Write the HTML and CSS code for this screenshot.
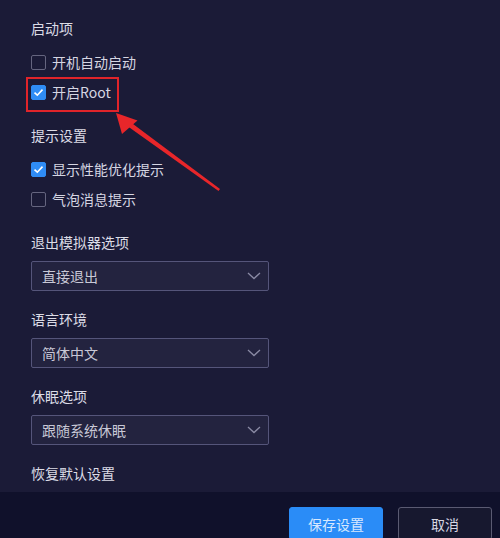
FILE: index.html
```html
<!DOCTYPE html>
<html lang="zh-CN">
<head>
    <meta charset="UTF-8">
    <title>设置</title>
    <link rel="stylesheet" href="styles.css">
</head>
<body>
    <div class="panel">
        <h3 class="title">启动项</h3>
        <div class="group">
            <label class="check"><span class="box"></span>开机自动启动</label>
            <label class="check on"><span class="box"><svg viewBox="0 0 15 15" width="15" height="15"><path d="M3.5 7.6 L6.3 10.2 L11.5 4.6" fill="none" stroke="#fff" stroke-width="1.6"/></svg></span>开启Root</label>
        </div>

        <h3 class="title">提示设置</h3>
        <div class="group">
            <label class="check on"><span class="box"><svg viewBox="0 0 15 15" width="15" height="15"><path d="M3.5 7.6 L6.3 10.2 L11.5 4.6" fill="none" stroke="#fff" stroke-width="1.6"/></svg></span>显示性能优化提示</label>
            <label class="check"><span class="box"></span>气泡消息提示</label>
        </div>

        <h3 class="title">退出模拟器选项</h3>
        <div class="group">
            <div class="select">直接退出<svg class="chev" viewBox="0 0 14 8" width="14" height="8"><path d="M1 1 L7 6.5 L13 1" fill="none" stroke="#8a8aa4" stroke-width="1.3"/></svg></div>
        </div>

        <h3 class="title">语言环境</h3>
        <div class="group">
            <div class="select">简体中文<svg class="chev" viewBox="0 0 14 8" width="14" height="8"><path d="M1 1 L7 6.5 L13 1" fill="none" stroke="#8a8aa4" stroke-width="1.3"/></svg></div>
        </div>

        <h3 class="title">休眠选项</h3>
        <div class="group">
            <div class="select">跟随系统休眠<svg class="chev" viewBox="0 0 14 8" width="14" height="8"><path d="M1 1 L7 6.5 L13 1" fill="none" stroke="#8a8aa4" stroke-width="1.3"/></svg></div>
        </div>

        <h3 class="title last">恢复默认设置</h3>
    </div>

    <div class="footer">
        <button class="btn primary">保存设置</button>
        <button class="btn">取消</button>
    </div>

    <!-- 标注：红框和箭头 -->
    <div class="mark"></div>
    <svg class="arrow" width="500" height="538" viewBox="0 0 500 538">
        <path d="M220 189 L218.5 191 L128 126.5 L131 122.5 Z" fill="#e8262a"/>
        <path d="M116 113 L137.5 120.5 L122 134 Z" fill="#e8262a"/>
    </svg>
</body>
</html>
```

FILE: styles.css
```css
html, body {
    margin: 0;
    height: 100%;
}
body {
    font-family: "Noto Sans CJK SC", "Noto Sans", sans-serif;
    background: #1b1b37;
    color: #d6d6e2;
    font-size: 14px;
    position: relative;
    overflow: hidden;
}
.panel {
    padding: 18px 0 0 31px;
    height: 474px;
}
.title {
    margin: 0 0 9px;
    font-size: 14px;
    font-weight: normal;
    line-height: 20px;
    color: #dcdce6;
}
.group {
    margin-bottom: 18px;
}
.check {
    display: flex;
    align-items: center;
    height: 30px;
    gap: 6px;
    color: #d6d6e2;
}
.box {
    width: 13px;
    height: 13px;
    border: 1px solid #65657f;
    border-radius: 2px;
    display: flex;
}
.check.on .box {
    background: #2f8cf5;
    border-color: #2f8cf5;
}
.check.on .box svg {
    margin: -1px;
}
.select {
    width: 216px;
    height: 28px;
    padding: 0 10px;
    border: 1px solid #55557a;
    border-radius: 2px;
    background: #23233f;
    display: flex;
    align-items: center;
    justify-content: space-between;
    color: #c8c8d6;
}
.chev {
    margin-right: -3px;
}
.footer {
    box-sizing: border-box;
    background: #10112b;
    height: 46px;
    padding: 15px 8px 0 0;
    display: flex;
    justify-content: flex-end;
    gap: 15px;
    overflow: hidden;
}
.btn {
    flex: none;
    width: 94px;
    height: 33px;
    border: 1px solid #5a5a72;
    border-radius: 3px;
    background: #17182f;
    color: #d6d6e2;
    font-family: inherit;
    font-size: 14px;
}
.btn.primary {
    background: #2a8cf7;
    border-color: #2a8cf7;
    color: #d6e8ff;
}
.mark {
    position: absolute;
    left: 26px;
    top: 77px;
    width: 89px;
    height: 31px;
    border: 2px solid #e0242a;
}
.arrow {
    position: absolute;
    left: 0;
    top: 0;
}
```
